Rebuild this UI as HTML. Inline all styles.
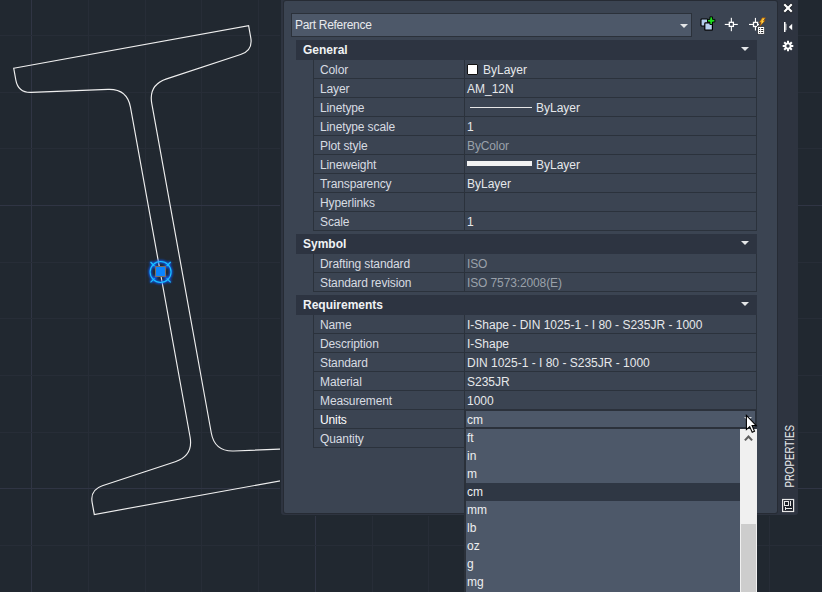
<!DOCTYPE html>
<html><head><meta charset="utf-8">
<style>
html,body{margin:0;padding:0;}
body{width:822px;height:592px;overflow:hidden;position:relative;background:#212830;font-family:"Liberation Sans",sans-serif;font-size:12px;}
.a{position:absolute;}
#pal{left:281px;top:-5px;width:517px;height:520px;background:#2e3440;border-radius:0 0 3px 3px;}
#pbord{left:283px;top:0px;width:495px;height:514px;background:#262b34;border-radius:3px;}
#panel{left:284px;top:1px;width:493px;height:512px;background:#3b4452;border-radius:2px;}
#combo{left:291px;top:13px;width:399px;height:22px;background:#4d5869;border:1px solid #2b313a;}
.hdr{left:296px;width:461px;height:20px;background:#2d3441;color:#f0f2f4;font-weight:bold;}
.hdr span{position:absolute;left:7px;top:3px;}
.tri{position:absolute;width:0;height:0;border-left:4.2px solid transparent;border-right:4.2px solid transparent;border-top:4.5px solid #e4e6e8;}
.row{box-sizing:border-box;left:313px;width:444px;height:19px;border:1px solid #2b323c;border-top:0;color:#d8dce2;}
.row .k{position:absolute;left:6px;top:3px;white-space:nowrap;letter-spacing:-0.12px;}
.row .v{position:absolute;left:150px;top:0;width:291px;height:18px;border-left:1px solid #2b323c;}
.row .v span{position:absolute;left:2px;top:3px;white-space:nowrap;color:#e6e8eb;}
.row .v span.g{color:#9aa1aa;letter-spacing:-0.12px;}
</style></head>
<body>
<svg class="a" style="left:0;top:0" width="822" height="592">
  <g id="grid" shape-rendering="crispEdges">
<rect x="31" y="0" width="1" height="592" fill="#303544"/>
<rect x="88" y="0" width="1" height="592" fill="#272d37"/>
<rect x="145" y="0" width="1" height="592" fill="#272d37"/>
<rect x="201" y="0" width="1" height="592" fill="#272d37"/>
<rect x="258" y="0" width="1" height="592" fill="#272d37"/>
<rect x="315" y="0" width="1" height="592" fill="#303544"/>
<rect x="372" y="0" width="1" height="592" fill="#272d37"/>
<rect x="428" y="0" width="1" height="592" fill="#272d37"/>
<rect x="485" y="0" width="1" height="592" fill="#272d37"/>
<rect x="542" y="0" width="1" height="592" fill="#272d37"/>
<rect x="599" y="0" width="1" height="592" fill="#303544"/>
<rect x="655" y="0" width="1" height="592" fill="#272d37"/>
<rect x="712" y="0" width="1" height="592" fill="#272d37"/>
<rect x="769" y="0" width="1" height="592" fill="#272d37"/>
<rect x="0" y="35" width="822" height="1" fill="#272d37"/>
<rect x="0" y="92" width="822" height="1" fill="#272d37"/>
<rect x="0" y="148" width="822" height="1" fill="#272d37"/>
<rect x="0" y="205" width="822" height="1" fill="#303544"/>
<rect x="0" y="262" width="822" height="1" fill="#272d37"/>
<rect x="0" y="318" width="822" height="1" fill="#272d37"/>
<rect x="0" y="375" width="822" height="1" fill="#272d37"/>
<rect x="0" y="432" width="822" height="1" fill="#272d37"/>
<rect x="0" y="488" width="822" height="1" fill="#303544"/>
<rect x="0" y="545" width="822" height="1" fill="#272d37"/>
  </g>
  <g transform="translate(13.7 68.2) rotate(-10.24)">
    <path d="M0.00 0.00 L238.70 0.00 L238.70 12.10 Q238.70 25.10 225.70 26.92 L148.60 37.71 Q129.60 40.37 129.60 59.37 L129.60 394.13 Q129.60 413.13 148.60 415.79 L225.70 426.58 Q238.70 428.40 238.70 441.40 L238.70 453.50 L0.00 453.50 L0.00 441.40 Q0.00 428.40 13.00 426.58 L89.00 415.94 Q108.00 413.28 108.00 394.28 L108.00 59.22 Q108.00 40.22 89.00 37.56 L13.00 26.92 Q0.00 25.10 0.00 12.10 Z" fill="none" stroke="#efefef" stroke-width="1.15"/>
  </g>
</svg>
<div class="a" style="left:281px;top:515px;width:517px;height:1px;background:#212830;"></div>
<div class="a" style="left:280px;top:0;width:1px;height:516px;background:#212830;"></div>
<div class="a" id="pal"></div>
<div class="a" id="pbord"></div>
<div class="a" id="panel"></div>
<div class="a" id="combo"><span class="a" style="left:3px;top:4px;color:#e8eaed;letter-spacing:-0.3px;">Part Reference</span><div class="tri" style="left:388px;top:10px;"></div></div>

<div class="a hdr" style="top:40px"><span>General</span><div class="tri" style="left:445px;top:6.7px;"></div></div>
<div class="a row" style="top:60px"><span class="k">Color</span><div class="v"><span class="" style="left:18px">ByLayer</span></div></div>
<div class="a row" style="top:79px"><span class="k">Layer</span><div class="v"><span class="">AM_12N</span></div></div>
<div class="a row" style="top:98px"><span class="k">Linetype</span><div class="v"><span class="" style="left:71px">ByLayer</span></div></div>
<div class="a row" style="top:117px"><span class="k">Linetype scale</span><div class="v"><span class="">1</span></div></div>
<div class="a row" style="top:136px"><span class="k">Plot style</span><div class="v"><span class="g">ByColor</span></div></div>
<div class="a row" style="top:155px"><span class="k">Lineweight</span><div class="v"><span class="" style="left:71px">ByLayer</span></div></div>
<div class="a row" style="top:174px"><span class="k">Transparency</span><div class="v"><span class="">ByLayer</span></div></div>
<div class="a row" style="top:193px"><span class="k">Hyperlinks</span><div class="v"></div></div>
<div class="a row" style="top:212px"><span class="k">Scale</span><div class="v"><span class="">1</span></div></div>
<div class="a hdr" style="top:234px"><span>Symbol</span><div class="tri" style="left:445px;top:6.7px;"></div></div>
<div class="a row" style="top:254px"><span class="k">Drafting standard</span><div class="v"><span class="g">ISO</span></div></div>
<div class="a row" style="top:273px"><span class="k">Standard revision</span><div class="v"><span class="g">ISO 7573:2008(E)</span></div></div>
<div class="a hdr" style="top:295px"><span>Requirements</span><div class="tri" style="left:445px;top:6.7px;"></div></div>
<div class="a row" style="top:315px"><span class="k">Name</span><div class="v"><span class="">I-Shape - DIN 1025-1 - I 80 - S235JR - 1000</span></div></div>
<div class="a row" style="top:334px"><span class="k">Description</span><div class="v"><span class="">I-Shape</span></div></div>
<div class="a row" style="top:353px"><span class="k">Standard</span><div class="v"><span class="">DIN 1025-1 - I 80 - S235JR - 1000</span></div></div>
<div class="a row" style="top:372px"><span class="k">Material</span><div class="v"><span class="">S235JR</span></div></div>
<div class="a row" style="top:391px"><span class="k">Measurement</span><div class="v"><span class="">1000</span></div></div>
<div class="a row" style="top:410px"><span class="k" style="color:#fff">Units</span><div class="v"></div></div>
<div class="a row" style="top:429px"><span class="k">Quantity</span><div class="v"></div></div>

<!-- color square & line samples -->
<div class="a" style="left:467px;top:64px;width:9px;height:9px;background:#fff;border:1px solid #111;border-radius:1px;"></div>
<div class="a" style="left:470px;top:107px;width:62px;height:1px;background:#e6e6e6;"></div>
<div class="a" style="left:467px;top:161px;width:65px;height:5px;background:#f2f2f2;"></div>
<!-- grip -->
<svg class="a" style="left:140px;top:252px" width="42" height="42" viewBox="140 252 42 42">
  <defs><filter id="gl" x="-50%" y="-50%" width="200%" height="200%"><feGaussianBlur stdDeviation="1.2"/></filter></defs>
  <g stroke="#0a5cff" stroke-width="3" fill="none" filter="url(#gl)" opacity="0.9">
    <circle cx="160.6" cy="272" r="10.5"/>
    <line x1="150.5" y1="262" x2="170.7" y2="282.3"/><line x1="170.7" y1="262" x2="150.5" y2="282.3"/>
  </g>
  <g stroke="#19c6ff" stroke-width="1.1" fill="none">
    <circle cx="160.6" cy="272" r="10.5"/>
    <line x1="150.5" y1="262" x2="154.5" y2="266"/><line x1="166.7" y1="278.3" x2="170.7" y2="282.3"/>
    <line x1="170.7" y1="262" x2="166.7" y2="266"/><line x1="154.5" y1="278.3" x2="150.5" y2="282.3"/>
  </g>
  <rect x="155.5" y="266.5" width="10" height="10" fill="#0a84ff" stroke="#7a6e68" stroke-width="1"/>
</svg>
<!-- toolbar icons -->
<svg class="a" style="left:698px;top:14px" width="70" height="22" viewBox="698 14 70 22">
  <rect x="701" y="19" width="6.6" height="7" rx="0.8" fill="#b4cdee" stroke="#000" stroke-width="1.1"/>
  <rect x="704.8" y="22.8" width="7.6" height="7.4" rx="0.8" fill="#b8d0f0" stroke="#000" stroke-width="1.2"/>
  <path d="M709.9 16.9h2.6v2.5h2.4v2.6h-2.4v2.5h-2.6v-2.5h-2.4v-2.6h2.4z" fill="#1fdc1f" stroke="#000" stroke-width="0.9"/>
  <g fill="#fff">
    <rect x="724.8" y="23.9" width="13" height="1.1"/>
    <rect x="730.8" y="17.8" width="1.1" height="13.4"/>
  </g>
  <rect x="729.3" y="22.3" width="4.1" height="4.1" fill="#3b4452" stroke="#fff" stroke-width="1.3"/>
  <g fill="#fff">
    <rect x="749" y="23.9" width="10" height="1.1"/>
    <rect x="754.9" y="17.9" width="1.1" height="12.6"/>
  </g>
  <rect x="753.5" y="22.4" width="4.1" height="4.1" fill="#3b4452" stroke="#fff" stroke-width="1.3"/>
  <path d="M762.2 17.8 L765.6 17.8 L763.5 20.6 L765.3 20.6 L759.8 26.2 L761.1 22.6 L759.3 22.6 Z" fill="#f7b521" stroke="#8a3c00" stroke-width="0.5"/>
  <path d="M763 19 L764 19 L762.3 21.6 L763.4 21.6 L761.4 23.8 Z" fill="#fff6a0" opacity="0.7"/>
  <rect x="757.6" y="26.6" width="7" height="7.6" fill="#fff" stroke="#1a1d22" stroke-width="0.6"/>
  <g fill="#111">
    <rect x="759.1" y="28" width="1" height="0.9"/><rect x="761.1" y="28" width="2.1" height="0.9"/>
    <rect x="759.1" y="30" width="1" height="0.9"/><rect x="761.1" y="30" width="2.1" height="0.9"/>
    <rect x="759.1" y="32" width="1" height="0.9"/><rect x="761.1" y="32" width="2.1" height="0.9"/>
  </g>
</svg>
<!-- side strip icons -->
<svg class="a" style="left:778px;top:0px" width="20" height="60" viewBox="778 0 20 60">
  <g stroke="#14171c" stroke-width="3.4" stroke-linecap="square" opacity="0.8"><line x1="785" y1="5" x2="791" y2="11"/><line x1="791" y1="5" x2="785" y2="11"/></g><g stroke="#fff" stroke-width="2.2" stroke-linecap="square"><line x1="785" y1="5" x2="791" y2="11"/><line x1="791" y1="5" x2="785" y2="11"/></g>
  <rect x="784" y="22" width="1.5" height="10" fill="#fff"/>
  <rect x="785.5" y="23.8" width="0.9" height="6.4" fill="#e8e8e8"/>
  <path d="M792.2 23.8 L792.2 30.2 L788.8 27 Z" fill="#fff"/>
  <g transform="translate(788 46)">
    <circle r="2.6" fill="none" stroke="#fff" stroke-width="1.8"/>
    <g stroke="#fff" stroke-width="2"><line x1="0" y1="-5.3" x2="0" y2="-2.5"/><line x1="0" y1="5.3" x2="0" y2="2.5"/><line x1="-5.3" y1="0" x2="-2.5" y2="0"/><line x1="5.3" y1="0" x2="2.5" y2="0"/>
    <line x1="-3.8" y1="-3.8" x2="-1.8" y2="-1.8"/><line x1="3.8" y1="3.8" x2="1.8" y2="1.8"/><line x1="3.8" y1="-3.8" x2="1.8" y2="-1.8"/><line x1="-3.8" y1="3.8" x2="-1.8" y2="1.8"/></g>
  </g>
</svg>
<svg class="a" style="left:778px;top:418px" width="20" height="74" viewBox="778 418 20 74"><text transform="translate(794 487.6) rotate(-90)" font-family="Liberation Sans" font-size="12.8" fill="#e6e8ea" textLength="62.5" lengthAdjust="spacingAndGlyphs">PROPERTIES</text></svg>
<svg class="a" style="left:780px;top:496px" width="16" height="18" viewBox="780 496 16 18">
  <rect x="782.6" y="499.5" width="11" height="12" fill="#1c2028" stroke="#e8e8e8" stroke-width="1.2"/>
  <rect x="784.5" y="501.5" width="4" height="4" fill="none" stroke="#e8e8e8" stroke-width="1"/>
  <rect x="790" y="501" width="1" height="5" fill="#e8e8e8"/>
  <rect x="785" y="508" width="7" height="1" fill="#e8e8e8"/>
  <rect x="785" y="507" width="1" height="3" fill="#e8e8e8"/>
</svg>
<div class="a" style="left:464px;top:409px;width:292px;height:20px;background:#2b313b;"></div>
<div class="a" style="left:466px;top:411px;width:289px;height:16px;background:#4d5869;"><span class="a" style="left:1px;top:2px;color:#eceef0;">cm</span></div>
<!-- units dropdown arrow -->
<div class="tri" style="left:744px;top:417px;border-left-width:4px;border-right-width:4px;border-top-width:4px;border-top-color:#d8dadd"></div>
<!-- dropdown list -->
<div class="a" style="left:464px;top:429px;width:276px;height:163px;background:#4d5869;border-left:2px solid #2b313a;"></div>
<div class="a" style="left:466px;top:483px;width:274px;height:18px;background:#2f3744;"></div>
<div class="a" style="left:467px;top:428px;color:#eceef0;line-height:18px;">
  <div style="height:18px;padding-top:1px">ft</div><div style="height:18px">in</div><div style="height:18px">m</div><div style="height:18px">cm</div><div style="height:18px">mm</div><div style="height:18px">lb</div><div style="height:18px">oz</div><div style="height:18px">g</div><div style="height:18px">mg</div>
</div>
<!-- scrollbar -->
<div class="a" style="left:740px;top:429px;width:17px;height:163px;background:#f0f0f0;"></div>
<div class="a" style="left:741px;top:524px;width:15px;height:68px;background:#cdcdcd;"></div>
<svg class="a" style="left:740px;top:429px" width="17" height="17"><path d="M4.9 11.4 L8.5 7.6 L12.1 11.4" fill="none" stroke="#5e5e5e" stroke-width="2.1"/></svg>
<!-- cursor -->
<svg class="a" style="left:744px;top:413px" width="16" height="24" viewBox="0 0 16 24">
  <path d="M2.4 2.4 L2.4 16.6 L5.7 13.6 L8.2 19.2 L10.5 18.2 L8.1 12.6 L12.3 12.6 Z" fill="#fff" stroke="#000" stroke-width="1.1" stroke-linejoin="miter"/>
</svg>
</body></html>
